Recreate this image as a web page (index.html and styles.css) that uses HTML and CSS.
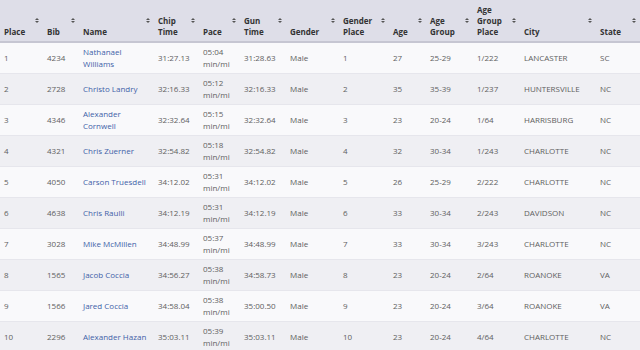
FILE: index.html
```html
<!DOCTYPE html>
<html lang="en">
<head>
    <meta charset="UTF-8">
    <title>Results</title>
    <link rel="stylesheet" href="styles.css">
</head>
<body>
    <table class="results">
        <colgroup>
            <col style="width:43px"><col style="width:36px"><col style="width:75px"><col style="width:45px">
            <col style="width:41px"><col style="width:46px"><col style="width:53px"><col style="width:50px">
            <col style="width:37px"><col style="width:47px"><col style="width:47px"><col style="width:76px">
            <col style="width:44px">
        </colgroup>
        <thead>
            <tr>
                <th>Place<span class="sort"></span></th>
                <th>Bib<span class="sort"></span></th>
                <th>Name<span class="sort"></span></th>
                <th>Chip<br>Time<span class="sort"></span></th>
                <th>Pace<span class="sort"></span></th>
                <th>Gun<br>Time<span class="sort"></span></th>
                <th>Gender<span class="sort"></span></th>
                <th>Gender<br>Place<span class="sort"></span></th>
                <th>Age<span class="sort"></span></th>
                <th>Age<br>Group<span class="sort"></span></th>
                <th>Age<br>Group<br>Place<span class="sort"></span></th>
                <th>City<span class="sort"></span></th>
                <th>State<span class="sort"></span></th>
            </tr>
        </thead>
        <tbody>
            <tr><td>1</td><td>4234</td><td><a href="#">Nathanael Williams</a></td><td>31:27.13</td><td>05:04 min/mi</td><td>31:28.63</td><td>Male</td><td>1</td><td>27</td><td>25-29</td><td>1/222</td><td>LANCASTER</td><td>SC</td></tr>
            <tr><td>2</td><td>2728</td><td><a href="#">Christo Landry</a></td><td>32:16.33</td><td>05:12 min/mi</td><td>32:16.33</td><td>Male</td><td>2</td><td>35</td><td>35-39</td><td>1/237</td><td>HUNTERSVILLE</td><td>NC</td></tr>
            <tr><td>3</td><td>4346</td><td><a href="#">Alexander Cornwell</a></td><td>32:32.64</td><td>05:15 min/mi</td><td>32:32.64</td><td>Male</td><td>3</td><td>23</td><td>20-24</td><td>1/64</td><td>HARRISBURG</td><td>NC</td></tr>
            <tr><td>4</td><td>4321</td><td><a href="#">Chris Zuerner</a></td><td>32:54.82</td><td>05:18 min/mi</td><td>32:54.82</td><td>Male</td><td>4</td><td>32</td><td>30-34</td><td>1/243</td><td>CHARLOTTE</td><td>NC</td></tr>
            <tr><td>5</td><td>4050</td><td><a href="#">Carson Truesdell</a></td><td>34:12.02</td><td>05:31 min/mi</td><td>34:12.02</td><td>Male</td><td>5</td><td>26</td><td>25-29</td><td>2/222</td><td>CHARLOTTE</td><td>NC</td></tr>
            <tr><td>6</td><td>4638</td><td><a href="#">Chris Raulli</a></td><td>34:12.19</td><td>05:31 min/mi</td><td>34:12.19</td><td>Male</td><td>6</td><td>33</td><td>30-34</td><td>2/243</td><td>DAVIDSON</td><td>NC</td></tr>
            <tr><td>7</td><td>3028</td><td><a href="#">Mike McMillen</a></td><td>34:48.99</td><td>05:37 min/mi</td><td>34:48.99</td><td>Male</td><td>7</td><td>33</td><td>30-34</td><td>3/243</td><td>CHARLOTTE</td><td>NC</td></tr>
            <tr><td>8</td><td>1565</td><td><a href="#">Jacob Coccia</a></td><td>34:56.27</td><td>05:38 min/mi</td><td>34:58.73</td><td>Male</td><td>8</td><td>23</td><td>20-24</td><td>2/64</td><td>ROANOKE</td><td>VA</td></tr>
            <tr><td>9</td><td>1566</td><td><a href="#">Jared Coccia</a></td><td>34:58.04</td><td>05:38 min/mi</td><td>35:00.50</td><td>Male</td><td>9</td><td>23</td><td>20-24</td><td>3/64</td><td>ROANOKE</td><td>VA</td></tr>
            <tr><td>10</td><td>2296</td><td><a href="#">Alexander Hazan</a></td><td>35:03.11</td><td>05:39 min/mi</td><td>35:03.11</td><td>Male</td><td>10</td><td>23</td><td>20-24</td><td>4/64</td><td>CHARLOTTE</td><td>NC</td></tr>
        </tbody>
    </table>
</body>
</html>
```

FILE: styles.css
```css
body {
    margin: 0;
    padding: 0;
    background: #ffffff;
    font-family: 'Open Sans', sans-serif;
}
.results {
    width: 640px;
    table-layout: fixed;
    border-collapse: collapse;
    font-size: 8px;
    color: #606060;
}
.results th {
    position: relative;
    box-sizing: border-box;
    height: 42px;
    padding: 0 10px 4px 4px;
    text-align: left;
    vertical-align: bottom;
    font-weight: bold;
    line-height: 11px;
    color: #333333;
    background-color: #dedee8;
    border-bottom: 2px solid #c6c6d2;
}
/* little up/down arrows */
.sort {
    position: absolute;
    right: 4px;
    top: 18px;
    width: 4px;
    height: 5px;
}
.sort::before, .sort::after {
    content: '';
    position: absolute;
    left: 0;
    border-left: 2px solid transparent;
    border-right: 2px solid transparent;
}
.sort::before {
    top: 0;
    border-bottom: 2px solid #555;
}
.sort::after {
    bottom: 0;
    border-top: 2px solid #555;
}
.results td {
    box-sizing: border-box;
    height: 31px;
    padding: 0 4px;
    line-height: 12px;
    vertical-align: middle;
    border-top: 1px solid #e6e6ec;
}
.results tbody tr:nth-child(odd) {
    background-color: #f9f9fb;
}
.results tbody tr:nth-child(even) {
    background-color: #efeff3;
}
.results a {
    color: #3f5fa8;
    text-decoration: none;
}
```
